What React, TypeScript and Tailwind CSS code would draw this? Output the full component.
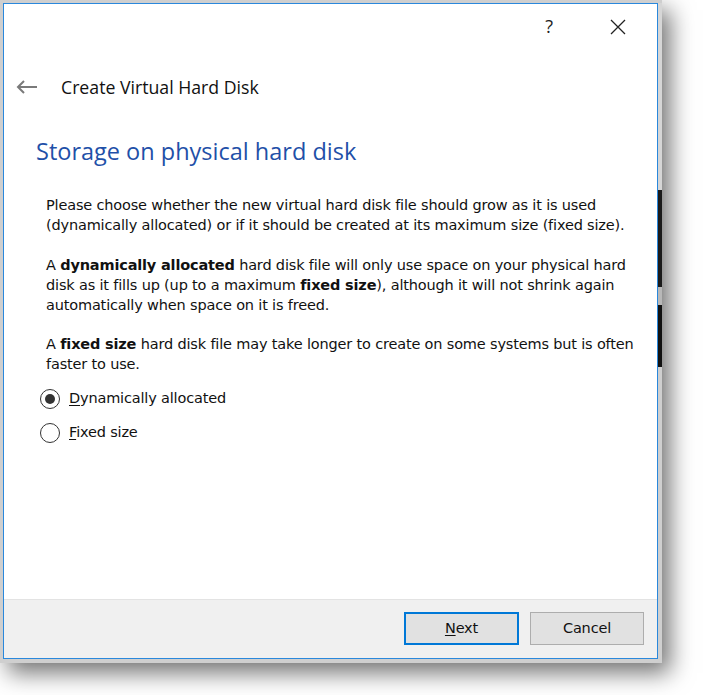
import React from "react";

const body = "font-['DejaVu_Sans',sans-serif] text-[14.5px] tracking-[-0.17px] text-[#111]";

const Radio: React.FC<{ checked?: boolean; label: string }> = ({ checked, label }) => {
  return (
    <div className="flex items-center h-[34px]">
      <span className="w-[20px] h-[20px] rounded-full border-[1.5px] border-[#333] bg-white flex items-center justify-center">
        {checked && <span className="w-[10px] h-[10px] rounded-full bg-[#333]" />}
      </span>
      <span className={`${body} ml-[9px]`}>
        <span className="underline underline-offset-2">{label[0]}</span>
        {label.slice(1)}
      </span>
    </div>
  );
};

export default function App() {
  return (
    <div className="w-[703px] h-[695px] bg-white overflow-hidden">
      <div className="w-[662px] h-[663px] bg-[#cfcfcf] pl-[3px] pt-[3px] flex shadow-[8px_10px_22px_rgba(0,0,0,0.55)]">
        <div className="w-[655px] h-[656px] border border-[#2a88dc] bg-white flex flex-col">
          {/* title bar */}
          <div className="h-[52px] flex items-start justify-end pt-[10px] pr-[31px] gap-[57px]">
            <span className="font-['Open_Sans',sans-serif] text-[18px] text-[#222] leading-[24px]">?</span>
            <svg width="16" height="16" viewBox="0 0 16 16" className="mt-[5px]">
              <path d="M1 1L15 15M15 1L1 15" stroke="#222" strokeWidth="1.3" fill="none" />
            </svg>
          </div>

          {/* header */}
          <div className="h-[30px] flex items-center pl-[12px] mt-[16px]">
            <svg width="22" height="14" viewBox="0 0 22 14">
              <path d="M21 7H2M8 1L2 7L8 13" stroke="#7a7a7a" strokeWidth="2" fill="none" />
            </svg>
            <span className="ml-[23px] font-['Open_Sans',sans-serif] text-[17.7px] text-[#111]">
              Create Virtual Hard Disk
            </span>
          </div>

          <div className="pl-[32px] mt-[33px] font-['Open_Sans',sans-serif] text-[23.5px] text-[#1f50a8] leading-[32px]">
            Storage on physical hard disk
          </div>

          <div className={`pl-[42px] mt-[28px] leading-[20px] ${body}`}>
            <p>
              Please choose whether the new virtual hard disk file should grow as it is used
              <br />
              (dynamically allocated) or if it should be created at its maximum size (fixed size).
            </p>
            <p className="mt-[20px]">
              A <b>dynamically allocated</b> hard disk file will only use space on your physical hard
              <br />
              disk as it fills up (up to a maximum <b>fixed size</b>), although it will not shrink again
              <br />
              automatically when space on it is freed.
            </p>
            <p className="mt-[19px]">
              A <b>fixed size</b> hard disk file may take longer to create on some systems but is often
              <br />
              faster to use.
            </p>
          </div>

          <div className="pl-[36px] mt-[8px] flex flex-col">
            <Radio checked label="Dynamically allocated" />
            <Radio label="Fixed size" />
          </div>

          <div className="flex-1" />

          {/* footer */}
          <div className="h-[59px] bg-[#f0f0f0] border-t border-[#e3e3e3] flex items-start justify-end gap-[11px] pt-[12px] pr-[13px]">
            <button className={`w-[115px] h-[33px] bg-[#e1e1e1] border-2 border-[#0078d7] ${body}`}>
              <span className="underline underline-offset-2">N</span>ext
            </button>
            <button className={`w-[114px] h-[33px] bg-[#e1e1e1] border border-[#adadad] ${body}`}>
              Cancel
            </button>
          </div>
        </div>

        {/* edges of the windows behind */}
        <div className="w-[4px] flex flex-col">
          <div className="h-[187px] bg-[#d6d6d6]" />
          <div className="h-[97px] bg-[#1a1a1a]" />
          <div className="h-[18px] bg-[#b8b8b8]" />
          <div className="h-[62px] bg-[#111]" />
          <div className="flex-1 bg-[#cfcfcf]" />
        </div>
      </div>
    </div>
  );
}
